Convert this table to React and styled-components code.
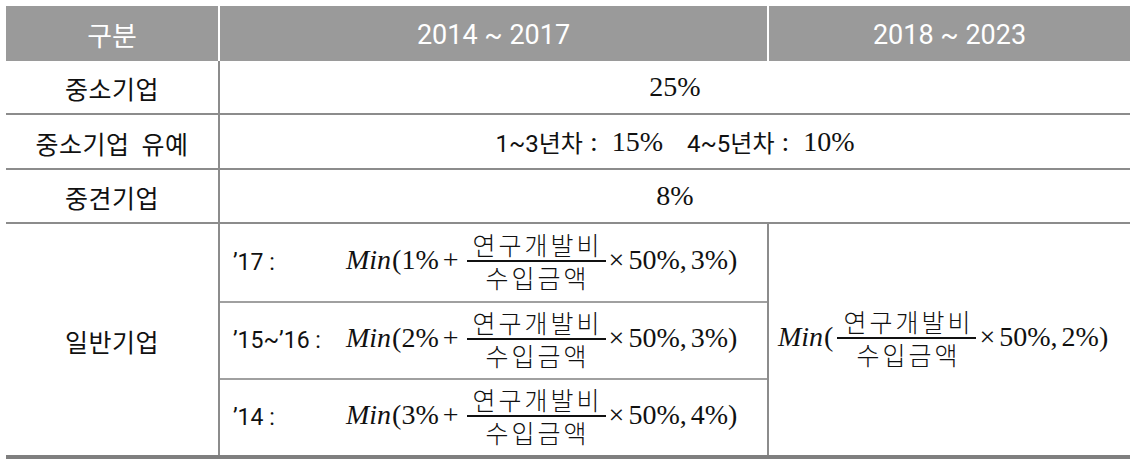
import React from "react";
import styled, { createGlobalStyle } from "styled-components";

const GlobalStyle = createGlobalStyle`
  body {
    margin: 0;
    background: #fff;
    font-family: "Noto Sans CJK KR", sans-serif;
    color: #111;
  }
`;

const Table = styled.div`
  display: flex;
  flex-direction: column;
  width: 1124px;
  margin: 6px 0 0 6px;
`;

const Row = styled.div`
  display: grid;
  grid-template-columns: ${(props) => (props.merged ? "212px 912px" : "212px 549px 363px")};
  height: ${(props) => props.height || 54}px;
  box-sizing: border-box;
  border-bottom: ${(props) => (props.last ? "4px solid #7f7f7f" : "2px solid #8c8c8c")};
`;

const HeadRow = styled.div`
  display: grid;
  grid-template-columns: 212px 549px 363px;
  height: 55px;
  background: #9a9a9a;
`;

const Th = styled.div`
  display: flex;
  align-items: center;
  justify-content: center;
  color: #fff;
  font-family: Roboto, "Noto Sans CJK KR", sans-serif;
  font-size: 27px;
  border-left: ${(props) => (props.first ? "none" : "2px solid #fff")};
  padding-top: 2px;
`;

const Label = styled.div`
  display: flex;
  align-items: center;
  justify-content: center;
  font-family: "Noto Sans CJK KR", sans-serif;
  font-size: 25px;
  letter-spacing: 0.5px;
  padding-top: 2px;
`;

const Cell = styled.div`
  display: flex;
  align-items: center;
  justify-content: ${(props) => (props.start ? "flex-start" : "center")};
  border-left: 2px solid #8c8c8c;
  padding-left: ${(props) => props.padLeft || 0}px;
  white-space: nowrap;
`;

const SubStack = styled.div`
  display: flex;
  flex-direction: column;
  border-left: 2px solid #8c8c8c;
`;

const SubRow = styled.div`
  display: grid;
  grid-template-columns: 113px 1fr;
  align-items: center;
  height: 77px;
  box-sizing: border-box;
  padding-left: 13px;
  border-top: ${(props) => (props.first ? "none" : "2px solid #a0a0a0")};
`;

const Year = styled.span`
  font-family: Roboto, "Noto Sans CJK KR", sans-serif;
  font-size: 23px;
  color: #111;
`;

const Sans = styled.span`
  font-family: Roboto, "Noto Sans CJK KR", sans-serif;
  font-size: 24px;
  margin-left: ${(props) => props.offset || 0}px;
`;

const Math = styled.span`
  font-family: "Liberation Serif", "DejaVu Serif", serif;
  font-size: 28px;
  color: #111;
  white-space: nowrap;
  margin-left: ${(props) => props.offset || 0}px;
`;

const It = styled.i`
  font-family: "Liberation Serif", serif;
  font-style: italic;
  margin-right: 1px;
`;

const Op = styled.span`
  display: inline-block;
  margin-left: ${(props) => props.left ?? 4}px;
  margin-right: ${(props) => props.right ?? 4}px;
`;

const Frac = styled.span`
  display: inline-flex;
  flex-direction: column;
  align-items: center;
  vertical-align: middle;
  margin: 0 2px 0 4px;
  position: relative;
  top: -2px;
`;

const FracPart = styled.span`
  font-family: "Noto Sans CJK KR", sans-serif;
  font-weight: 300;
  font-size: 25px;
  letter-spacing: 3px;
  line-height: 27px;
  padding: ${(props) => (props.top ? "0 3px 2px 6px" : "2px 8px 0 11px")};
`;

const Bar = styled.span`
  align-self: stretch;
  height: 2px;
  background: #111;
`;

const Fraction = () => (
  <Frac>
    <FracPart top>연구개발비</FracPart>
    <Bar />
    <FracPart>수입금액</FracPart>
  </Frac>
);

const Formula = ({ base, cap }) => (
  <Math>
    <It>Min</It>(
    {base && (
      <>
        {base}
        <Op>+</Op>
      </>
    )}
    <Fraction />
    <Op left={1} right={4}>×</Op>
    50%,<Op left={0} right={4} />
    {cap})
  </Math>
);

const subRows = [
  { year: "’17 :", base: "1%", cap: "3%" },
  { year: "’15~’16 :", base: "2%", cap: "3%" },
  { year: "’14 :", base: "3%", cap: "4%" },
];

export default function App() {
  return (
    <>
      <GlobalStyle />
      <Table>
        <HeadRow>
          <Th first>구분</Th>
          <Th>2014 ~ 2017</Th>
          <Th>2018 ~ 2023</Th>
        </HeadRow>
        <Row merged>
          <Label>중소기업</Label>
          <Cell>
            <Math>25%</Math>
          </Cell>
        </Row>
        <Row merged height={55}>
          <Label>중소기업&nbsp; 유예</Label>
          <Cell>
            <Sans>1~3년차</Sans>
            <Math offset={7}>:&nbsp; 15%</Math>
            <Sans offset={24}>4~5년차</Sans>
            <Math offset={7}>:&nbsp; 10%</Math>
          </Cell>
        </Row>
        <Row merged>
          <Label>중견기업</Label>
          <Cell>
            <Math>8%</Math>
          </Cell>
        </Row>
        <Row height={235} last>
          <Label>일반기업</Label>
          <SubStack>
            {subRows.map((r, i) => (
              <SubRow key={i} first={i === 0}>
                <Year>{r.year}</Year>
                <Formula base={r.base} cap={r.cap} />
              </SubRow>
            ))}
          </SubStack>
          <Cell start padLeft={9}>
            <Formula cap="2%" />
          </Cell>
        </Row>
      </Table>
    </>
  );
}
